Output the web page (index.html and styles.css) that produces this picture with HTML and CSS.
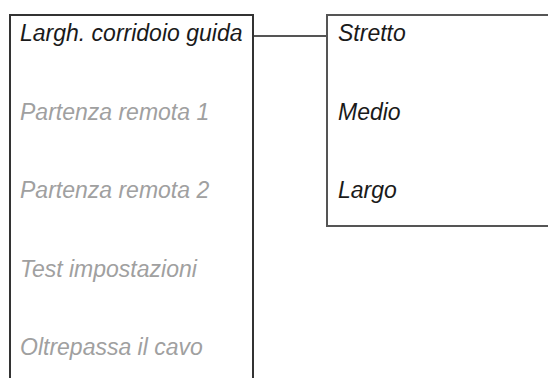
FILE: index.html
```html
<!DOCTYPE html>
<html lang="it">
<head>
    <meta charset="UTF-8">
    <meta name="viewport" content="width=device-width, initial-scale=1.0">
    <title>Menu</title>
    <link rel="stylesheet" href="styles.css">
</head>
<body>
    <div class="screen">
        <div class="menu main">
            <div class="item active">Largh. corridoio guida</div>
            <div class="item">Partenza remota 1</div>
            <div class="item">Partenza remota 2</div>
            <div class="item">Test impostazioni</div>
            <div class="item">Oltrepassa il cavo</div>
        </div>
        <div class="link"></div>
        <div class="menu sub">
            <div class="item active">Stretto</div>
            <div class="item active">Medio</div>
            <div class="item active">Largo</div>
        </div>
    </div>
</body>
</html>
```

FILE: styles.css
```css
body {
    margin: 0;
    background: #fff;
    font-family: "Liberation Sans", Arial, sans-serif;
    overflow: hidden;
}
.screen {
    display: flex;
    align-items: flex-start;
    padding: 14px 0 0 9px;
    height: 378px;
    box-sizing: border-box;
}
.menu {
    display: grid;
    grid-auto-rows: 78.6px;
    box-sizing: border-box;
    padding: 4px 0 0 9px;
}
.main {
    width: 245px;
    height: 364px;
    border: 2px solid #333;
    border-bottom: none;
    overflow: hidden;
}
.sub {
    flex: 1;
    height: 213px;
    border: 2px solid #555;
    border-right: none;
    padding-left: 10px;
}
.link {
    width: 72px;
    height: 2px;
    margin-top: 21px;
    background: #555;
}
.item {
    font-size: 23px;
    font-style: italic;
    line-height: 26px;
    color: #a0a0a0;
}
.item.active {
    color: #1a1a1a;
}
```
